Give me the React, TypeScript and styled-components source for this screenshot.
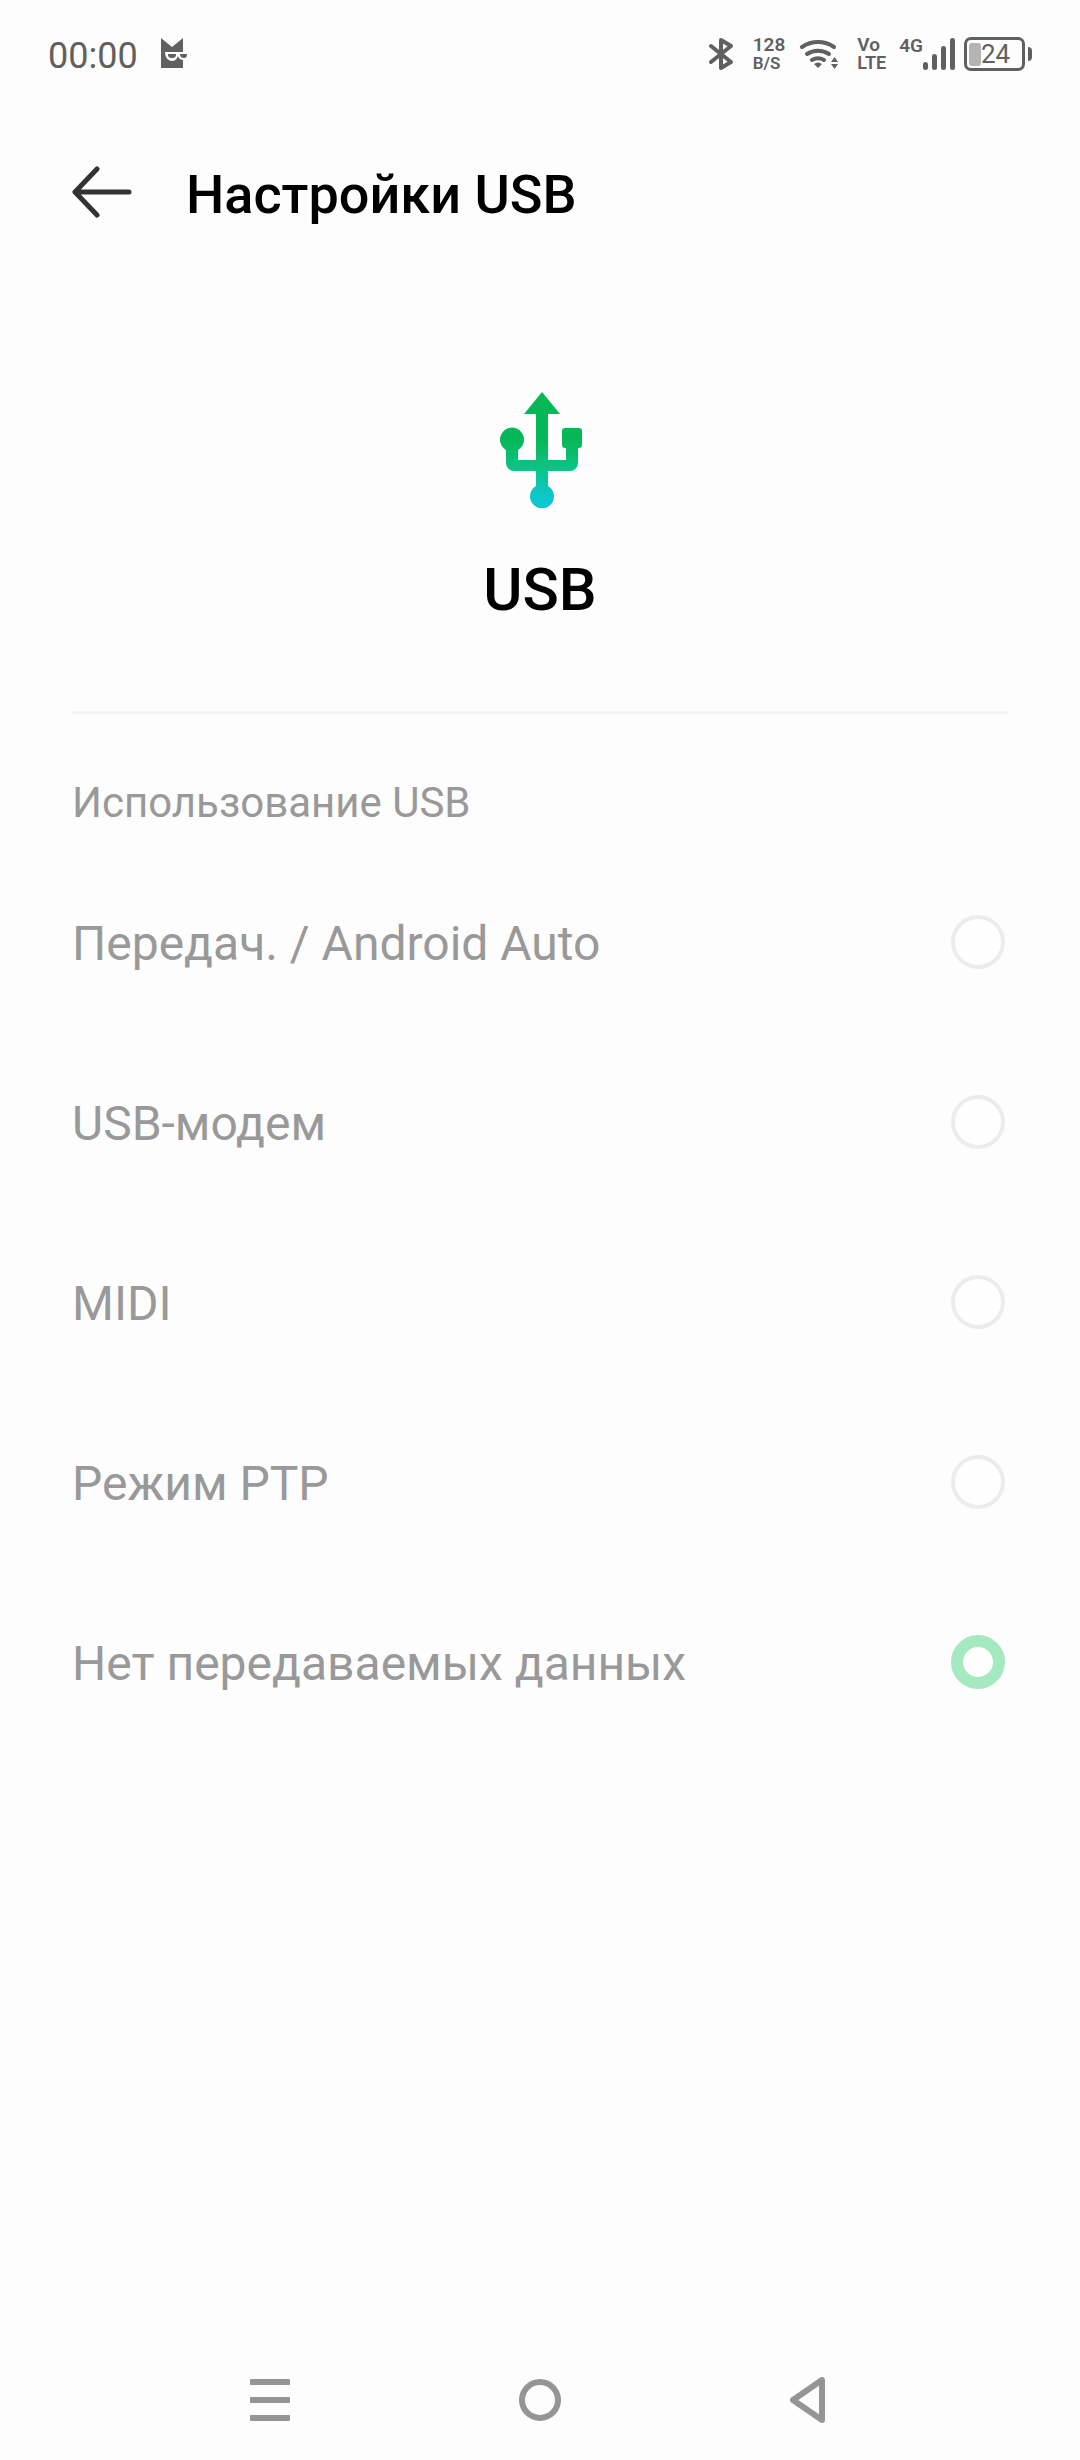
import React, { useState } from "react";
import styled, { createGlobalStyle } from "styled-components";

const GlobalStyle = createGlobalStyle`
  *, *::before, *::after { box-sizing: border-box; }
  body {
    margin: 0;
    background: #fdfdfd;
    font-family: Roboto, "Noto Sans", sans-serif;
  }
`;

const Page = styled.div`
  min-height: 100vh;
  display: flex;
  flex-direction: column;
  background: #fdfdfd;
`;

const StatusBar = styled.div`
  display: flex;
  align-items: center;
  justify-content: space-between;
  height: 108px;
  padding: 0 48px;
  color: #606060;
`;

const StatusGroup = styled.div`
  display: flex;
  align-items: center;
`;

const Slot = styled.span<{ $after?: number }>`
  display: flex;
  margin-right: ${(p) => p.$after ?? 0}px;
`;

const Time = styled.time`
  margin-right: 23px;
  padding-top: 3px;
  font-size: 36px;
  line-height: 44px;
`;

const Stack = styled.span<{ $after: number }>`
  display: flex;
  flex-direction: column;
  margin-right: ${(p) => p.$after}px;
`;

const Tiny = styled.span<{ $size: number }>`
  font-size: ${(p) => p.$size}px;
  line-height: 18px;
  font-weight: 600;
`;

const Network = styled.span`
  display: flex;
  align-items: flex-start;
  margin-right: 9px;
`;

const Battery = styled.span`
  display: flex;
  align-items: center;
  gap: 3px;
`;

const BatteryBody = styled.span`
  display: flex;
  align-items: center;
  width: 61px;
  height: 34px;
  padding-left: 2px;
  border: 3px solid #606060;
  border-radius: 7px;
  font-size: 26px;
  line-height: 28px;
`;

const BatteryFill = styled.span`
  width: 12px;
  height: 23px;
  border-radius: 3px;
  background: #b4b4b4;
`;

const BatteryTip = styled.span`
  width: 4px;
  height: 14px;
  border-radius: 0 4px 4px 0;
  background: #606060;
`;

const Header = styled.header`
  display: flex;
  align-items: center;
  height: 168px;
  padding: 0 72px;
  gap: 54px;
`;

const PlainButton = styled.button`
  display: flex;
  align-items: center;
  justify-content: center;
  padding: 0;
  border: 0;
  background: none;
  cursor: pointer;
`;

const Title = styled.h1`
  margin: 0;
  padding-top: 6px;
  font-size: 54px;
  line-height: 64px;
  font-weight: 500;
  color: #000;
`;

const Hero = styled.section`
  display: flex;
  flex-direction: column;
  align-items: center;
  gap: 46px;
  margin: 0 72px;
  padding: 116px 0 85px;
  border-bottom: 3px solid #f4f4f4;
`;

const HeroName = styled.h2`
  margin: 0;
  font-size: 60px;
  line-height: 72px;
  font-weight: 500;
  color: #000;
`;

const Options = styled.fieldset`
  flex: 1;
  min-width: 0;
  margin: 0;
  padding: 64px 72px 0;
  border: 0;
`;

const Legend = styled.legend`
  float: left;
  width: 100%;
  margin-bottom: 24px;
  padding: 0;
  font-size: 42px;
  line-height: 50px;
  color: #999;
`;

const Row = styled.label`
  clear: both;
  display: flex;
  align-items: center;
  justify-content: space-between;
  height: 180px;
  padding-right: 3px;
  color: #999;
`;

const RowText = styled.span`
  padding-top: 3px;
  font-size: 48px;
  line-height: 56px;
`;

const Radio = styled.input`
  appearance: none;
  flex: none;
  width: 54px;
  height: 54px;
  margin: 0;
  border: 4px solid #ececec;
  border-radius: 50%;
  background: #fefefe;

  &:checked {
    border: 12px solid #a5e9c1;
  }
`;

const NavBar = styled.nav`
  display: grid;
  grid-template-columns: repeat(3, 1fr);
  height: 120px;
  padding: 0 12.5%;
`;

const CatIcon = () => (
  <svg width="28" height="32" viewBox="161 38 28 32" aria-hidden="true">
    <path d="M161 38l11 9 11-9v30h-22z" fill="#606060" />
    <path d="M165 52h24c0 5-2 8-5 8-3 0-5-1-6-4-1 3-3 5-6 5-4 0-7-4-7-9z" fill="#fdfdfd" />
    <path d="M168 54h8c0 3-1 4-4 4s-4-1-4-4zM180 54h7c0 3-1 4-3 4s-4-1-4-4z" fill="#606060" />
  </svg>
);

const BluetoothIcon = () => (
  <svg width="26" height="34" viewBox="707 38 26 34" fill="none" stroke="#606060" strokeWidth="4" strokeLinecap="round" strokeLinejoin="round" aria-hidden="true">
    <path d="M710 47l20 16-10 6V41l10 6-20 16" />
  </svg>
);

const WifiIcon = () => (
  <svg width="40" height="34" viewBox="799 37 40 34" fill="none" stroke="#606060" strokeWidth="4" strokeLinecap="round" aria-hidden="true">
    <path d="M802 47a28 28 0 0 1 32 0M807 54a20 20 0 0 1 22 0M812 60a12 12 0 0 1 12 0" />
    <path d="M814 64q4-3 8 0l-4 4z" fill="#606060" stroke="none" />
    <path d="M831 62l3.5-5 3.5 5zM831 64h7l-3.5 5z" fill="#606060" stroke="none" />
  </svg>
);

const SignalIcon = () => (
  <svg width="32" height="34" viewBox="923 37 32 34" stroke="#606060" strokeWidth="5" strokeLinecap="round" aria-hidden="true">
    <path d="M925.5 64.5v3M934.5 56.5v11M943.5 48.5v19M952.5 40.5v27" />
  </svg>
);

const BackArrow = () => (
  <svg width="60" height="52" viewBox="0 0 60 52" fill="none" stroke="#333" strokeWidth="5" strokeLinecap="round" strokeLinejoin="round" aria-hidden="true">
    <path d="M25 3L3 26l22 23M3 26h54" />
  </svg>
);

const UsbIcon = () => (
  <svg width="84" height="116" viewBox="498 392 84 116" role="img" aria-label="USB">
    <defs>
      <linearGradient id="usb" gradientUnits="userSpaceOnUse" x1="0" y1="392" x2="0" y2="508">
        <stop offset="0.4" stopColor="#06b755" />
        <stop offset="0.65" stopColor="#0cc384" />
        <stop offset="0.88" stopColor="#0cc8c8" />
        <stop offset="1" stopColor="#0cc8d4" />
      </linearGradient>
    </defs>
    <path
      fill="url(#usb)"
      d="M542 392l18 22h-12v46h18v-12h-1a3 3 0 0 1-3-3v-14a3 3 0 0 1 3-3h14a3 3 0 0 1 3 3v14a3 3 0 0 1-3 3h-1v15a8 8 0 0 1-8 8h-22v15a12 12 0 1 1-12 0v-15h-22a8 8 0 0 1-8-8v-13a12 12 0 1 1 12 0v10h18v-46h-12z"
    />
  </svg>
);

const MenuIcon = () => (
  <svg width="40" height="42" viewBox="0 0 40 42" fill="#959595" aria-hidden="true">
    <rect width="40" height="6" rx="1" />
    <rect y="18" width="40" height="6" rx="1" />
    <rect y="36" width="40" height="6" rx="1" />
  </svg>
);

const HomeIcon = () => (
  <svg width="42" height="42" viewBox="0 0 42 42" aria-hidden="true">
    <circle cx="21" cy="21" r="18" fill="none" stroke="#959595" strokeWidth="6" />
  </svg>
);

const BackIcon = () => (
  <svg width="40" height="46" viewBox="0 0 40 46" aria-hidden="true">
    <path d="M32 3v40L3 23z" fill="none" stroke="#959595" strokeWidth="6" strokeLinejoin="round" />
  </svg>
);

const modes = [
  "Передач. / Android Auto",
  "USB-модем",
  "MIDI",
  "Режим PTP",
  "Нет передаваемых данных",
];

export default function App() {
  const [mode] = useState(modes[4]);

  return (
    <Page>
      <GlobalStyle />
      <StatusBar>
        <StatusGroup>
          <Time>00:00</Time>
          <CatIcon />
        </StatusGroup>
        <StatusGroup>
          <Slot $after={19}><BluetoothIcon /></Slot>
          <Stack $after={14}>
            <Tiny $size={19}>128</Tiny>
            <Tiny $size={17}>B/S</Tiny>
          </Stack>
          <Slot $after={18}><WifiIcon /></Slot>
          <Stack $after={13}>
            <Tiny $size={19}>Vo</Tiny>
            <Tiny $size={18}>LTE</Tiny>
          </Stack>
          <Network>
            <Tiny $size={19}>4G</Tiny>
            <SignalIcon />
          </Network>
          <Battery>
            <BatteryBody>
              <BatteryFill />
              24
            </BatteryBody>
            <BatteryTip />
          </Battery>
        </StatusGroup>
      </StatusBar>

      <Header>
        <PlainButton type="button" aria-label="Назад"><BackArrow /></PlainButton>
        <Title>Настройки USB</Title>
      </Header>

      <Hero>
        <UsbIcon />
        <HeroName>USB</HeroName>
      </Hero>

      <Options>
        <Legend>Использование USB</Legend>
        {modes.map((name, i) => (
          <Row key={name} htmlFor={`mode-${i}`}>
            <RowText>{name}</RowText>
            <Radio id={`mode-${i}`} type="radio" name="mode" value={name} checked={mode === name} disabled readOnly />
          </Row>
        ))}
      </Options>

      <NavBar>
        <PlainButton type="button" aria-label="Меню"><MenuIcon /></PlainButton>
        <PlainButton type="button" aria-label="Домой"><HomeIcon /></PlainButton>
        <PlainButton type="button" aria-label="Назад"><BackIcon /></PlainButton>
      </NavBar>
    </Page>
  );
}
